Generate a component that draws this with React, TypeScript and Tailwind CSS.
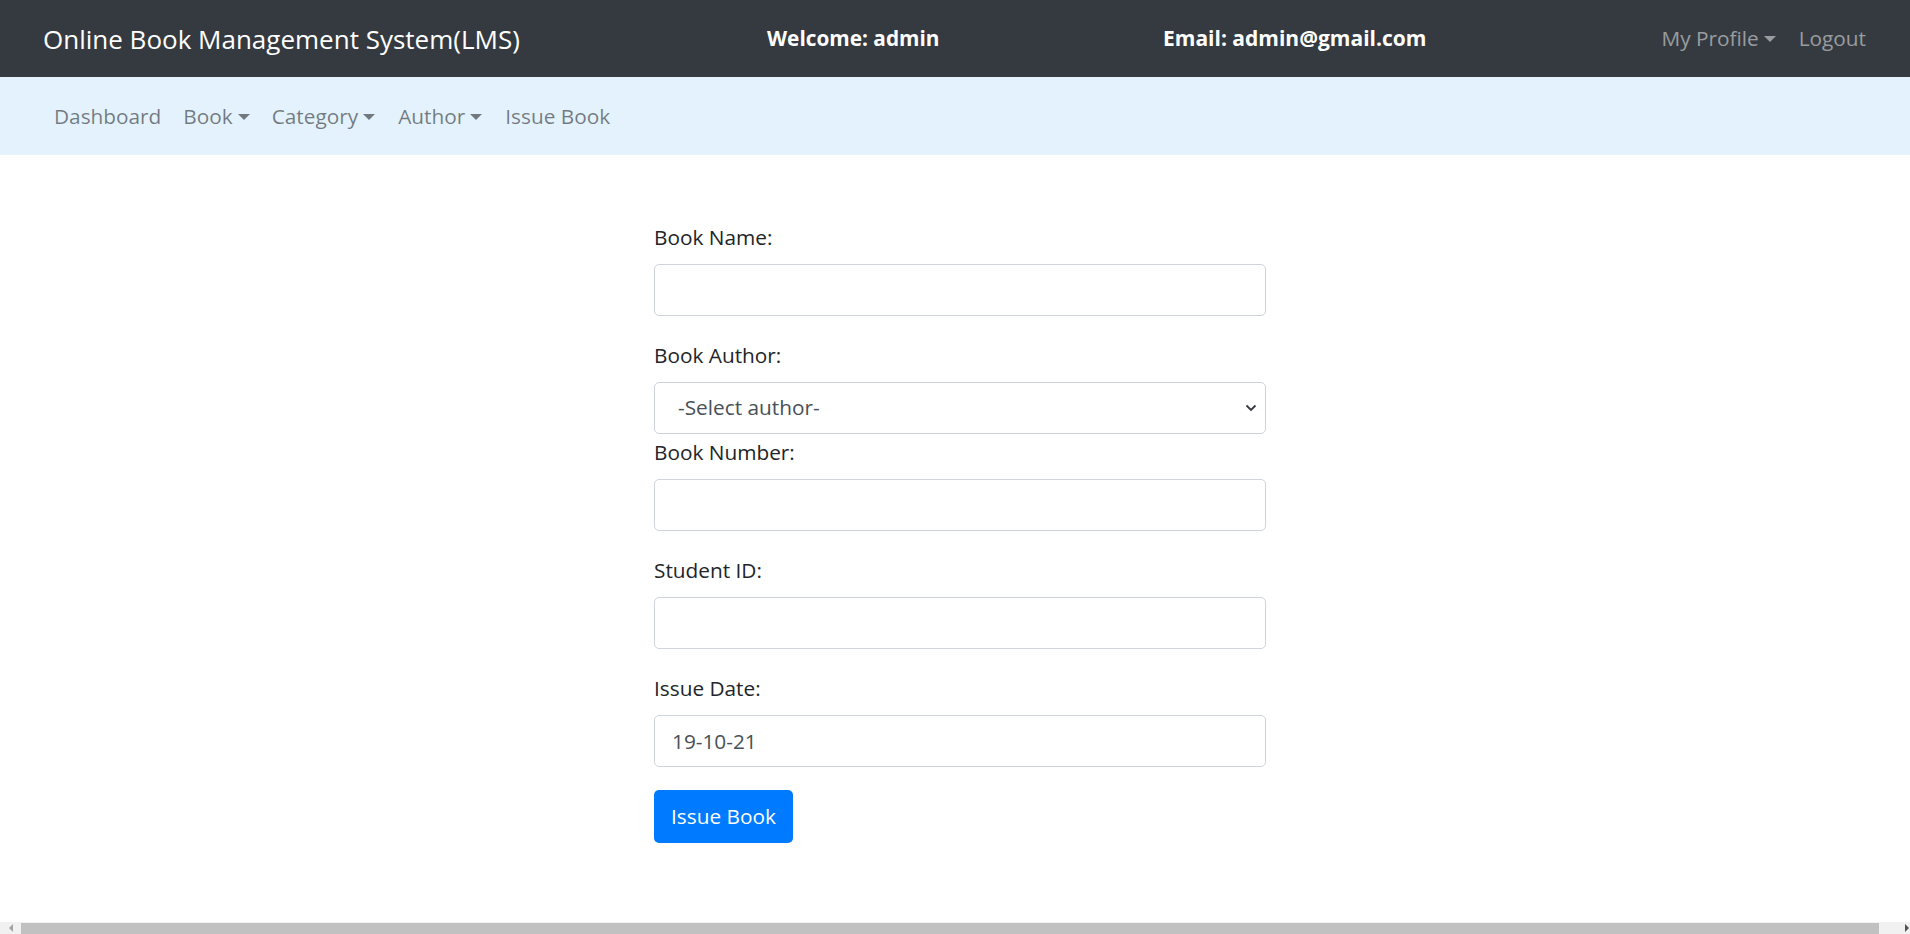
import React from "react";

const font = { fontFamily: '"Segoe UI", "Open Sans", "Noto Sans", sans-serif' };

function Caret({ className = "" }: { className?: string }) {
  return (
    <span
      className={
        "inline-block ml-[5px] w-0 h-0 border-l-[6px] border-r-[6px] border-t-[6px] border-l-transparent border-r-transparent " +
        className
      }
    />
  );
}

function Field({ label, children, mb = true }: { label: string; children: React.ReactNode; mb?: boolean }) {
  return (
    <div className={mb ? "mb-[21px]" : ""}>
      <label className="block text-[20.8px] leading-[36px] text-[#212529] mb-[9px]">{label}</label>
      {children}
    </div>
  );
}

function TextInput({ value = "" }: { value?: string }) {
  return (
    <input
      readOnly
      value={value}
      className="block w-full h-[52px] border border-[#ced4da] rounded-[5px] px-[17px] text-[20.8px] text-[#495057] bg-white outline-none"
    />
  );
}

export default function App() {
  return (
    <div style={font} className="h-screen flex flex-col bg-white overflow-hidden">
      {/* top dark bar */}
      <div className="h-[77px] shrink-0 bg-[#343a40] flex items-center pl-[43px] pr-[44px]">
        <div className="w-[724px] text-white text-[26px] leading-none">Online Book Management System(LMS)</div>
        <div className="w-[396px] text-white font-bold text-[20.8px]">Welcome: admin</div>
        <div className="text-white font-bold text-[21px]">Email: admin@gmail.com</div>
        <div className="ml-auto flex items-center text-[20.8px] text-white/50">
          <span className="flex items-center">
            My Profile
            <Caret className="border-t-white/50" />
          </span>
          <span className="ml-[23px]">Logout</span>
        </div>
      </div>

      {/* light nav */}
      <div className="h-[78px] shrink-0 bg-[#e3f2fd] flex items-center pl-[43px] pt-[2px] text-[20.8px] text-black/50">
        <span className="px-[11px]">Dashboard</span>
        <span className="px-[11px] flex items-center">Book<Caret className="border-t-black/50" /></span>
        <span className="px-[11px] flex items-center">Category<Caret className="border-t-black/50" /></span>
        <span className="px-[12px] flex items-center">Author<Caret className="border-t-black/50" /></span>
        <span className="px-[11px]">Issue Book</span>
      </div>

      {/* main */}
      <div className="flex-1 min-h-0">
        <div className="ml-[654px] w-[612px] pt-[64px]">
          <Field label="Book Name:">
            <TextInput />
          </Field>
          <Field label="Book Author:" mb={false}>
            <div className="relative h-[52px] border border-[#ced4da] rounded-[5px] bg-white flex items-center pl-[23px] text-[20.8px] text-[#495057]">
              -Select author-
              <svg className="absolute right-[8px] top-1/2 -translate-y-1/2" width="12" height="8" viewBox="0 0 12 8">
                <path d="M1.5 1.5 L6 6 L10.5 1.5" fill="none" stroke="#343a40" strokeWidth="1.8" />
              </svg>
            </div>
          </Field>
          <Field label="Book Number:">
            <TextInput />
          </Field>
          <Field label="Student ID:">
            <TextInput />
          </Field>
          <Field label="Issue Date:">
            <TextInput value="19-10-21" />
          </Field>
          <button className="h-[53px] px-[17px] bg-[#007bff] text-white text-[20.8px] rounded-[5px] mt-[2px]">
            Issue Book
          </button>
        </div>
      </div>

      {/* horizontal scrollbar */}
      <div className="h-[12px] shrink-0 bg-[#f1f1f1] flex items-stretch">
        <div className="w-[21px] flex items-center justify-center">
          <span className="w-0 h-0 border-t-[4px] border-b-[4px] border-r-[4px] border-t-transparent border-b-transparent border-r-[#a3a3a3]" />
        </div>
        <div className="flex-1 bg-[#c1c1c1] mt-[1px]" />
        <div className="w-[31px] flex items-center justify-end pr-[1px]">
          <span className="w-0 h-0 border-t-[4px] border-b-[4px] border-l-[4px] border-t-transparent border-b-transparent border-l-[#505050]" />
        </div>
      </div>
    </div>
  );
}
